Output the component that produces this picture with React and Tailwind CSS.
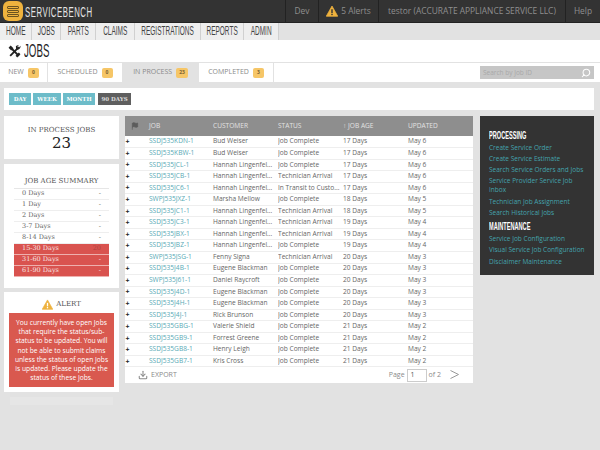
import React from "react";
import { Download, Flag, Search } from "lucide-react";

const condensed = "font-['Liberation_Sans',sans-serif] inline-block whitespace-nowrap leading-none";
const slab = "font-['DejaVu_Serif','Liberation_Serif',serif]";

const navItems = [
  { label: "HOME", w: "w-[32px]" },
  { label: "JOBS", w: "w-[29px]" },
  { label: "PARTS", w: "w-[35px]" },
  { label: "CLAIMS", w: "w-[39px]" },
  { label: "REGISTRATIONS", w: "w-[66px]" },
  { label: "REPORTS", w: "w-[43px]" },
  { label: "ADMIN", w: "w-[35px]" },
];

const tabs = [
  { label: "NEW", count: 0, w: "w-[48px]" },
  { label: "SCHEDULED", count: 0, w: "w-[75px]" },
  { label: "IN PROCESS", count: 23, w: "w-[76px]", active: true },
  { label: "COMPLETED", count: 3, w: "w-[75px]" },
];

const ageRows = [
  ["0 Days", "-"],
  ["1 Day", "-"],
  ["2 Days", "-"],
  ["3-7 Days", "-"],
  ["8-14 Days", "-"],
  ["15-30 Days", "20", true],
  ["31-60 Days", "-", true],
  ["61-90 Days", "-", true],
];

const jobs = [
  ["SSDJ535KDN-1", "Bud Weiser", "Job Complete", "17 Days", "May 6"],
  ["SSDJ535KBW-1", "Bud Weiser", "Job Complete", "17 Days", "May 6"],
  ["SSDJ535JCL-1", "Hannah Lingenfel...", "Job Complete", "17 Days", "May 6"],
  ["SSDJ535JCB-1", "Hannah Lingenfel...", "Technician Arrival", "17 Days", "May 6"],
  ["SSDJ535JC6-1", "Hannah Lingenfel...", "In Transit to Custo...", "17 Days", "May 6"],
  ["SWPJ535JXZ-1", "Marsha Mellow", "Job Complete", "18 Days", "May 5"],
  ["SSDJ535JC1-1", "Hannah Lingenfel...", "Technician Arrival", "18 Days", "May 5"],
  ["SSDJ535JC3-1", "Hannah Lingenfel...", "Technician Arrival", "19 Days", "May 4"],
  ["SSDJ535JBX-1", "Hannah Lingenfel...", "Technician Arrival", "19 Days", "May 4"],
  ["SSDJ535JBZ-1", "Hannah Lingenfel...", "Job Complete", "19 Days", "May 4"],
  ["SWPJ535JSG-1", "Fenny Signa", "Technician Arrival", "20 Days", "May 3"],
  ["SSDJ535J4B-1", "Eugene Blackman", "Job Complete", "20 Days", "May 3"],
  ["SWPJ535J61-1", "Daniel Raycroft", "Job Complete", "20 Days", "May 3"],
  ["SSDJ535J4D-1", "Eugene Blackman", "Job Complete", "20 Days", "May 3"],
  ["SSDJ535J4H-1", "Eugene Blackman", "Job Complete", "20 Days", "May 3"],
  ["SSDJ535J4J-1", "Rick Brunson", "Job Complete", "20 Days", "May 3"],
  ["SSDJ535GBG-1", "Valerie Shield", "Job Complete", "21 Days", "May 2"],
  ["SSDJ535GB9-1", "Forrest Greene", "Job Complete", "21 Days", "May 2"],
  ["SSDJ535GB8-1", "Henry Leigh", "Job Complete", "21 Days", "May 2"],
  ["SSDJ535GB7-1", "Kris Cross", "Job Complete", "21 Days", "May 2"],
];

const processing = [
  "Create Service Order",
  "Create Service Estimate",
  "Search Service Orders and Jobs",
  "Service Provider Service Job Inbox",
  "Technician Job Assignment",
  "Search Historical Jobs",
];

const maintenance = [
  "Service Job Configuration",
  "Visual Service Job Configuration",
  "Disclaimer Maintenance",
];

const Logo = () => (
  <div className="w-[20px] h-[20px] rounded-[6px] bg-[#eeb23e] flex flex-col items-center justify-center gap-[1px]">
    <span className="w-[12px] h-[3px] rounded-[1px] border border-[#6b5320]" />
    <span className="w-[12px] h-[3px] rounded-[1px] border border-[#6b5320]" />
    <span className="w-[12px] h-[3px] rounded-[1px] border border-[#6b5320]" />
  </div>
);

const WarnIcon = ({ size = 12, mark = "#333333" }) => (
  <svg width={size} height={size} viewBox="0 0 24 24">
    <path d="M12 2 L23.5 22.5 L0.5 22.5 Z" fill="#eeb23e" stroke="#eeb23e" strokeWidth="1.5" strokeLinejoin="round" />
    <rect x="10.6" y="8.5" width="2.8" height="7.5" fill={mark} />
    <rect x="10.6" y="17.5" width="2.8" height="2.8" fill={mark} />
  </svg>
);

const ToolsIcon = () => (
  <svg width="13" height="13" viewBox="0 0 24 24" fill="#222222" stroke="#222222">
    <path d="M4 20 L20 4" strokeWidth="3.5" fill="none" />
    <path d="M20 20 L7 7" strokeWidth="3.5" fill="none" />
    <path d="M1 5 L5 1 L10 6 L6 10 Z" stroke="none" />
    <path d="M23 1.5 a6 6 0 0 1 -7 7 l-1 -1 l-0.5 -5 a6 6 0 0 1 5.5 -2 l-3 3 l2.5 2.5 Z" stroke="none" />
    <path d="M17 23 L23 17 L20 14 L14 20 Z" stroke="none" />
  </svg>
);

const TopBar = () => (
  <div className="h-[23px] bg-[#333333] flex items-center border-b border-[#222222] font-['Open_Sans',sans-serif] text-[8.4px] text-[#8f8f8f]">
    <div className="flex items-center pl-[3px] gap-[2px] flex-1">
      <Logo />
      <span className={`${condensed} text-[15px] tracking-[1px] text-[#e4e4e4] origin-left scale-x-[0.52]`}>
        SERVICEBENCH
      </span>
    </div>
    <div className="h-full w-[33px] flex items-center justify-center border-l border-[#222222]">Dev</div>
    <div className="h-full w-[60px] flex items-center justify-center gap-[3px] border-l border-[#222222]">
      <WarnIcon />
      5 Alerts
    </div>
    <div className="h-full w-[187px] flex items-center justify-center border-l border-[#222222] whitespace-nowrap">
      testor (ACCURATE APPLIANCE SERVICE LLC)
    </div>
    <div className="h-full w-[35px] flex items-center justify-center border-l border-[#222222]">Help</div>
  </div>
);

const NavBar = () => (
  <div className="h-[17px] bg-[#e2e2e2] flex text-[#444444]">
    {navItems.map((item) => (
      <div
        key={item.label}
        className={`h-full ${item.w} flex items-center justify-center bg-[#eeeeee] border-r border-[#d0d0d0]`}
      >
        <span className={`${condensed} text-[12.5px] scale-x-[0.52]`}>{item.label}</span>
      </div>
    ))}
  </div>
);

const TitleBar = () => (
  <div className="h-[23px] bg-white flex items-center pl-[8px] gap-[3px] border-b border-[#e2e2e2]">
    <ToolsIcon />
    <span className={`${condensed} text-[18px] text-[#222222] origin-left scale-x-[0.54]`}>JOBS</span>
  </div>
);

const TabBar = () => (
  <div className="h-[19px] bg-white flex items-center font-['Open_Sans',sans-serif] text-[7px] text-[#8a8a8a]">
    {tabs.map((tab) => (
      <div
        key={tab.label}
        className={`h-full ${tab.w} flex items-center justify-center gap-[4px] border-r border-[#e2e2e2] ${tab.active ? "bg-[#e2e2e2]" : "bg-white"}`}
      >
        {tab.label}
        <span className="h-[10px] px-[3px] min-w-[11px] rounded-[2px] bg-[#f6c667] text-[#7a6233] text-[5px] font-bold flex items-center justify-center">
          {tab.count}
        </span>
      </div>
    ))}
    <div className="flex-1 flex justify-end pr-[6px]">
      <div className="w-[114px] h-[13px] bg-[#c6c6c6] flex items-center justify-between px-[3px] text-[#a8a8a8] text-[6.5px]">
        Search by Job ID
        <Search size={10} stroke="#ffffff" strokeWidth={2.5} className="-scale-x-100" />
      </div>
    </div>
  </div>
);

const FilterBar = () => (
  <div className={`h-[22px] bg-white flex items-center gap-[2px] pl-[5px] ${slab} text-[5.5px] font-bold text-white`}>
    <span className="h-[12px] w-[22px] bg-[#6dbcc9] flex items-center justify-center">DAY</span>
    <span className="h-[12px] w-[28px] bg-[#6dbcc9] flex items-center justify-center">WEEK</span>
    <span className="h-[12px] w-[32px] bg-[#6dbcc9] flex items-center justify-center">MONTH</span>
    <span className="h-[12px] w-[33px] ml-[1px] bg-[#5f5f5f] flex items-center justify-center text-[#dddddd]">90 DAYS</span>
  </div>
);

const LeftColumn = () => (
  <div className={`w-[115px] flex flex-col ${slab}`}>
    <div className="h-[43px] bg-white flex flex-col items-center pt-[9px] text-[#555555]">
      <div className="text-[7px] leading-[10px]">IN PROCESS JOBS</div>
      <div className="text-[15px] leading-[17px] text-[#222222]">23</div>
    </div>
    <div className="h-[124px] mt-[5px] bg-white px-[10px] pt-[12px]">
      <div className="text-[7px] leading-[10px] text-center text-[#555555] pb-[2px] border-b border-[#e6e6e6]">
        JOB AGE SUMMARY
      </div>
      {ageRows.map(([label, value, hot]) => (
        <div
          key={label}
          className={`h-[11px] flex justify-between items-center px-[8px] text-[6.5px] border-b ${
            hot ? "bg-[#d9534f] text-[#f7e3e2] border-[#eeb0ae]" : "text-[#666666] border-[#eeeeee]"
          }`}
        >
          <span>{label}</span>
          <span className={value === "20" ? "text-[#b0423f]" : ""}>{value}</span>
        </div>
      ))}
    </div>
    <div className="h-[100px] mt-[4px] bg-white px-[5px] pt-[6px]">
      <div className="flex items-center justify-center gap-[3px] text-[7px] text-[#555555] h-[12px]">
        <WarnIcon size={11} mark="#ffffff" />
        ALERT
      </div>
      <div className="mt-[3px] h-[74px] bg-[#d9594f] text-white font-['Open_Sans',sans-serif] text-[6.7px] leading-[9.2px] text-center px-[3px] pt-[5px]">
        You currently have open Jobs that require the status/sub-status to be updated. You will not be able to submit claims unless the status of open Jobs is updated. Please update the status of these Jobs.
      </div>
    </div>
    <div className="h-[8px] mt-[5px] mx-[6px] bg-[#e6e6e6]" />
  </div>
);

const JobsTable = () => (
  <div className="w-[348px] bg-white font-['Open_Sans',sans-serif] text-[6.6px] text-[#666666]">
    <table className="w-full table-fixed border-collapse">
      <thead>
        <tr className="h-[20px] bg-[#8e8e8e] text-left text-[#e2e2e2]">
          <th className="w-[24px] pl-[6px] font-normal">
            <Flag size={8} fill="#5c5c5c" stroke="#5c5c5c" />
          </th>
          <th className="w-[64px] font-normal">JOB</th>
          <th className="w-[65px] font-normal">CUSTOMER</th>
          <th className="w-[65px] font-normal">STATUS</th>
          <th className="w-[65px] font-normal">↑ JOB AGE</th>
          <th className="font-normal">UPDATED</th>
        </tr>
      </thead>
      <tbody>
        {jobs.map(([id, customer, status, age, updated]) => (
          <tr key={id} className="h-[11.55px] border-b border-[#eeeeee]">
            <td className="pl-[0.5px] text-[#222222] font-bold text-[7px] leading-none">+</td>
            <td className="text-[#57a9b5] leading-none whitespace-nowrap">{id}</td>
            <td className="leading-none whitespace-nowrap">{customer}</td>
            <td className="leading-none whitespace-nowrap overflow-hidden">{status}</td>
            <td className="leading-none">{age}</td>
            <td className="leading-none">{updated}</td>
          </tr>
        ))}
      </tbody>
    </table>
    <div className="h-[16px] flex items-center justify-between pl-[13px] pr-[14px] text-[#8a8a8a] text-[7px]">
      <div className="flex items-center gap-[3px]">
        <Download size={10} strokeWidth={2.5} />
        EXPORT
      </div>
      <div className="flex items-center gap-[2px]">
        Page
        <span className="w-[20px] h-[13px] border border-[#cccccc] pl-[3px] flex items-center text-[#555555]">1</span>
        of 2
        <svg width="9" height="10" viewBox="0 0 9 10" fill="none" stroke="#999999" className="ml-[7px]">
          <path d="M0.5 0.5 L8.5 4.5 L0.5 8.5" />
        </svg>
      </div>
    </div>
  </div>
);

const SideLinks = ({ title, links }) => (
  <div className="mb-[4.5px]">
    <div className="h-[12px] flex items-center">
      <span className={`${condensed} text-[10px] font-bold text-white origin-left scale-x-[0.56]`}>{title}</span>
    </div>
    <div className="flex flex-col gap-[2.3px] mt-[0.5px]">
      {links.map((link) => (
        <div key={link} className="text-[#44a3ad] leading-[9px]">
          {link}
        </div>
      ))}
    </div>
  </div>
);

const RightPanel = () => (
  <div className="w-[114px] h-[159px] bg-[#333333] pl-[9px] pr-[8px] pt-[14px] font-['Open_Sans',sans-serif] text-[6.5px]">
    <SideLinks title="PROCESSING" links={processing} />
    <SideLinks title="MAINTENANCE" links={maintenance} />
  </div>
);

const App = () => {
  return (
    <div className="w-[600px] h-[450px] overflow-hidden bg-[#e2e2e2]">
      <TopBar />
      <NavBar />
      <TitleBar />
      <TabBar />
      <div className="pl-[4px] pt-[6px] pr-[6px] flex flex-col gap-[6px]">
        <FilterBar />
        <div className="flex items-start">
          <LeftColumn />
          <div className="ml-[6px]">
            <JobsTable />
          </div>
          <div className="ml-[7px]">
            <RightPanel />
          </div>
        </div>
      </div>
    </div>
  );
};

export default App;
